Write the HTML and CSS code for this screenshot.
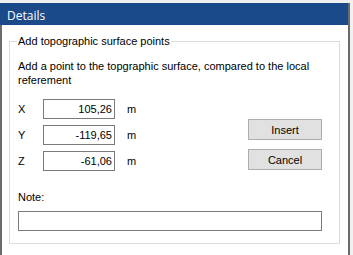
FILE: index.html
```html
<!DOCTYPE html>
<html>
<head>
<meta charset="utf-8">
<link rel="stylesheet" href="styles.css">
</head>
<body>
<div class="window">
  <div class="titlebar">Details</div>
  <div class="panel">
    <div class="group">
      <span class="legend">Add topographic surface points</span>
      <p class="intro">Add a point to the topgraphic surface, compared to the local referement</p>
      <div class="fields">
        <div class="coords">
          <div class="row"><span class="axis">X</span><span class="box">105,26</span><span class="unit">m</span></div>
          <div class="row"><span class="axis">Y</span><span class="box">-119,65</span><span class="unit">m</span></div>
          <div class="row"><span class="axis">Z</span><span class="box">-61,06</span><span class="unit">m</span></div>
        </div>
        <div class="actions">
          <button class="btn">Insert</button>
          <button class="btn">Cancel</button>
        </div>
      </div>
      <div class="note-label">Note:</div>
      <div class="note-box"></div>
    </div>
  </div>
</div>
</body>
</html>
```
FILE: styles.css
```css
html, body {
  margin: 0;
  padding: 0;
}
body {
  background: #f0f0f0;
  font-family: "Liberation Sans", Arial, sans-serif;
  font-size: 11px;
  color: #000;
  width: 353px;
  height: 255px;
  overflow: hidden;
}
.window {
  margin-top: 3px;
  width: 348px;
  height: 252px;
  border-right: 2px solid #6b6b6b;
  display: flex;
  flex-direction: column;
}
.titlebar {
  box-sizing: border-box;
  height: 22px;
  background: #1b4a8a;
  color: #fff;
  padding: 3px 0 0 7px;
  font-family: "Open Sans", "Noto Sans", sans-serif;
  font-size: 12px;
  line-height: 19px;
}
.panel {
  flex: 1;
  background: #fff;
  border-left: 2px solid #6b6b6b;
  padding: 16px 0 0 7px;
}
.group {
  position: relative;
  box-sizing: border-box;
  width: 331px;
  height: 203px;
  border: 1px solid #dcdcdc;
  padding: 0 0 0 8px;
}
.legend {
  position: absolute;
  top: -8px;
  left: 7px;
  background: #fff;
  padding: 0 1px;
  line-height: 14px;
}
.intro {
  margin: 0;
  padding-top: 17px;
  line-height: 14px;
  width: 310px;
}
.fields {
  display: flex;
  justify-content: space-between;
  margin-top: 12px;
  width: 304px;
}
.coords {
  display: flex;
  flex-direction: column;
  gap: 6px;
}
.row {
  display: flex;
  align-items: center;
  height: 20px;
}
.axis {
  width: 25px;
}
.box {
  box-sizing: border-box;
  width: 72px;
  height: 20px;
  border: 1px solid #7a7a7a;
  text-align: right;
  padding-right: 2px;
  line-height: 18px;
}
.unit {
  margin-left: 12px;
}
.actions {
  display: flex;
  flex-direction: column;
  gap: 9px;
  padding-top: 20px;
}
.btn {
  box-sizing: border-box;
  width: 74px;
  height: 21px;
  margin: 0;
  padding: 0;
  background: #e1e1e1;
  border: 1px solid #adadad;
  font: inherit;
  color: #000;
}
.note-label {
  margin-top: 19px;
  line-height: 14px;
}
.note-box {
  box-sizing: border-box;
  margin-top: 7px;
  width: 304px;
  height: 20px;
  border: 1px solid #7a7a7a;
}
```
